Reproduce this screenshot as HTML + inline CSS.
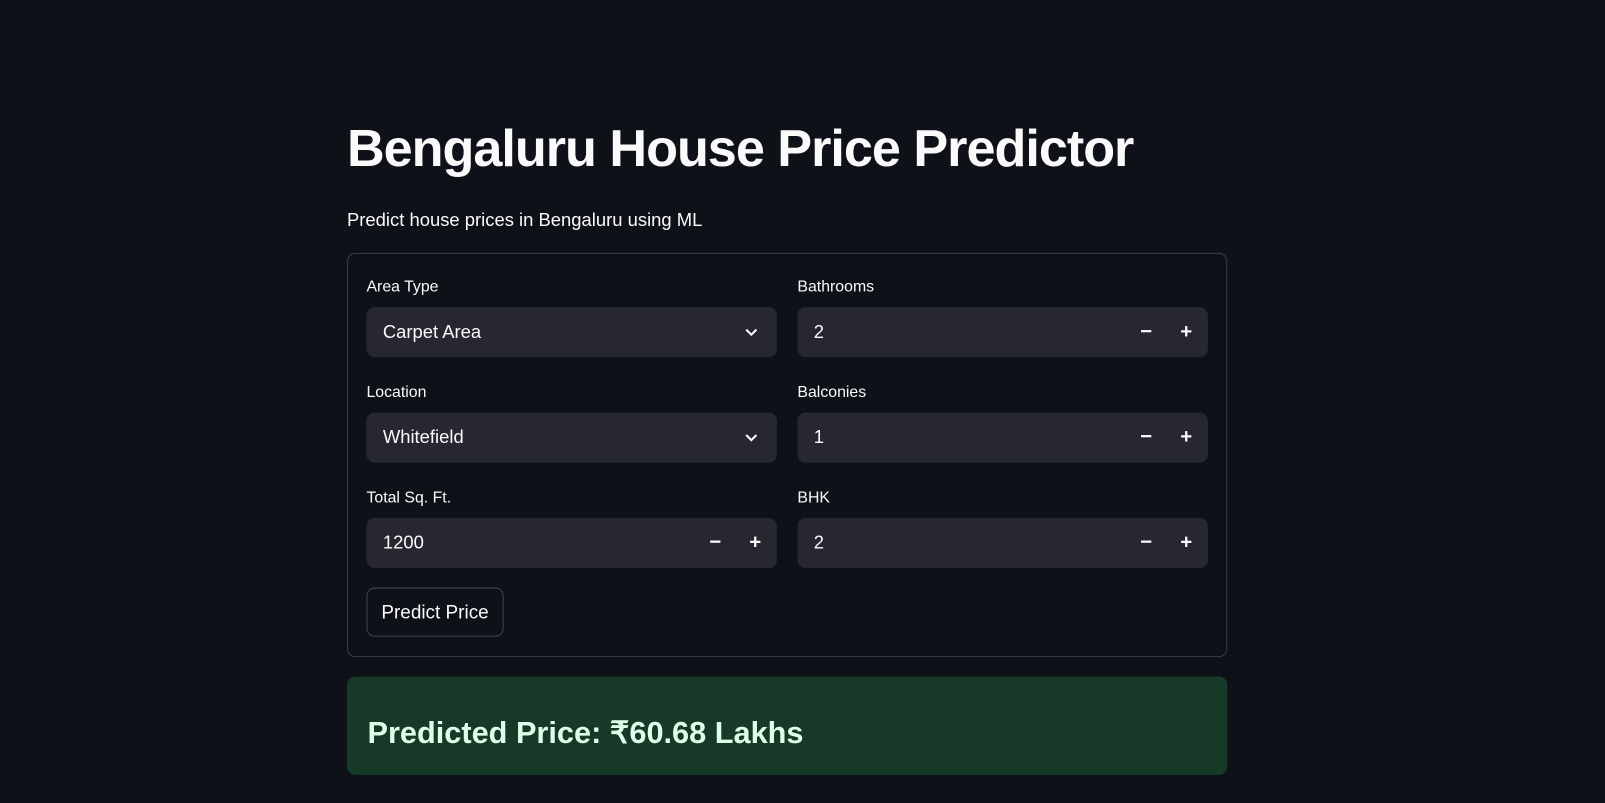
<!DOCTYPE html>
<html><head><meta charset="utf-8"><style>
*{box-sizing:border-box;margin:0;padding:0}
body{width:1605px;height:802px;background:#0e1117;color:#fafafa;font-family:"Liberation Sans",sans-serif;overflow:hidden}
#w{position:relative;width:1568px;height:784px;transform:scale(1.0236);transform-origin:0 0}
h1{position:absolute;left:339px;top:115px;font-size:51px;font-weight:700;letter-spacing:-1px;white-space:nowrap}
.sub{position:absolute;left:339px;top:205px;font-size:18px}
.box{position:absolute;left:339px;top:247px;width:860px;height:395px;border:1px solid #3a3c46;border-radius:8px}
.lbl{position:absolute;font-size:15.5px}
.inp{position:absolute;width:401px;height:49px;background:#262730;border-radius:8px;font-size:18px;padding-left:16px;line-height:49px}
.inp .ch{position:absolute;right:18px;top:18px}
.pm{position:absolute;top:0;font-size:20px;font-weight:700}
.btn{position:absolute;left:358px;top:574px;width:134px;height:48px;border:1px solid #44464f;border-radius:8px;font-size:18.5px;line-height:46px;text-align:center}
.ok{position:absolute;left:339px;top:661px;width:860px;height:96px;background:#173928;border-radius:8px;color:#dffde9;font-size:30px;font-weight:700;padding-left:20px;line-height:112px}
</style></head><body><div id="w">
<h1>Bengaluru House Price Predictor</h1>
<div class="sub">Predict house prices in Bengaluru using ML</div>
<div class="box"></div>
<div class="lbl" style="left:358px;top:272px">Area Type</div>
<div class="inp" style="left:358px;top:300px">Carpet Area<svg class="ch" width="14" height="14" viewBox="0 0 14 14"><path d="M2 4l5 5 5-5" stroke="#fafafa" stroke-width="2" fill="none"/></svg></div>
<div class="lbl" style="left:358px;top:375px">Location</div>
<div class="inp" style="left:358px;top:403px">Whitefield<svg class="ch" width="14" height="14" viewBox="0 0 14 14"><path d="M2 4l5 5 5-5" stroke="#fafafa" stroke-width="2" fill="none"/></svg></div>
<div class="lbl" style="left:358px;top:478px">Total Sq. Ft.</div>
<div class="inp" style="left:358px;top:506px">1200<span class="pm" style="left:335px">−</span><span class="pm" style="left:374px">+</span></div>
<div class="lbl" style="left:779px;top:272px">Bathrooms</div>
<div class="inp" style="left:779px;top:300px">2<span class="pm" style="left:335px">−</span><span class="pm" style="left:374px">+</span></div>
<div class="lbl" style="left:779px;top:375px">Balconies</div>
<div class="inp" style="left:779px;top:403px">1<span class="pm" style="left:335px">−</span><span class="pm" style="left:374px">+</span></div>
<div class="lbl" style="left:779px;top:478px">BHK</div>
<div class="inp" style="left:779px;top:506px">2<span class="pm" style="left:335px">−</span><span class="pm" style="left:374px">+</span></div>
<div class="btn">Predict Price</div>
<div class="ok">Predicted Price: ₹60.68 Lakhs</div>
</div></body></html>
